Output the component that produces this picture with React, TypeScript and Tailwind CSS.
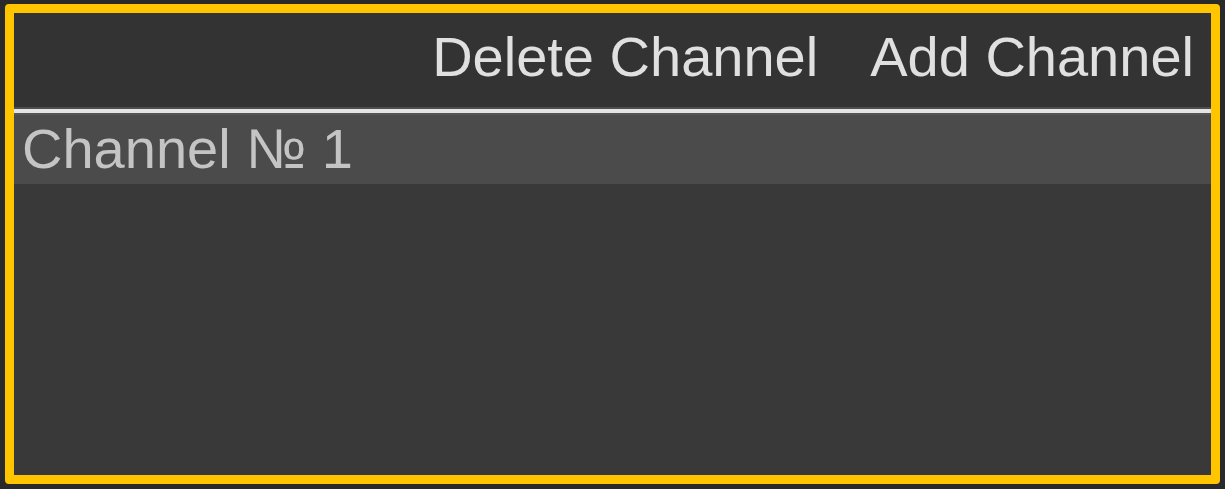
export default function App() {
  return (
    <div
      className="w-[1225px] h-[489px] bg-[#2a2a2a] pt-[4px] pb-[5px] pl-[5px] pr-[5px]"
      style={{ fontFamily: '"Liberation Sans", Arial, sans-serif' }}
    >
      <div className="h-full border-[9px] border-[#ffc600] rounded-[4px] flex flex-col bg-[#393939] overflow-hidden">
        <div className="h-[94px] shrink-0 bg-[#333333] flex items-start justify-end pt-[16px] pr-[17px] gap-[52px] text-[56px] leading-none text-[#e0e0e0]">
          <span>Delete Channel</span>
          <span>Add Channel</span>
        </div>
        <div className="h-[2px] shrink-0 bg-[#4e4e4e]" />
        <div className="h-[4px] shrink-0 bg-[#e4e4e4]" />
        <div className="h-[2px] shrink-0 bg-[#555555]" />
        <div className="h-[69px] shrink-0 bg-[#4b4b4b] pt-[6px] pl-[8px] text-[56px] leading-none text-[#c4c4c4]">
          Channel № 1
        </div>
        <div className="flex-1 bg-[#393939]" />
      </div>
    </div>
  );
}
